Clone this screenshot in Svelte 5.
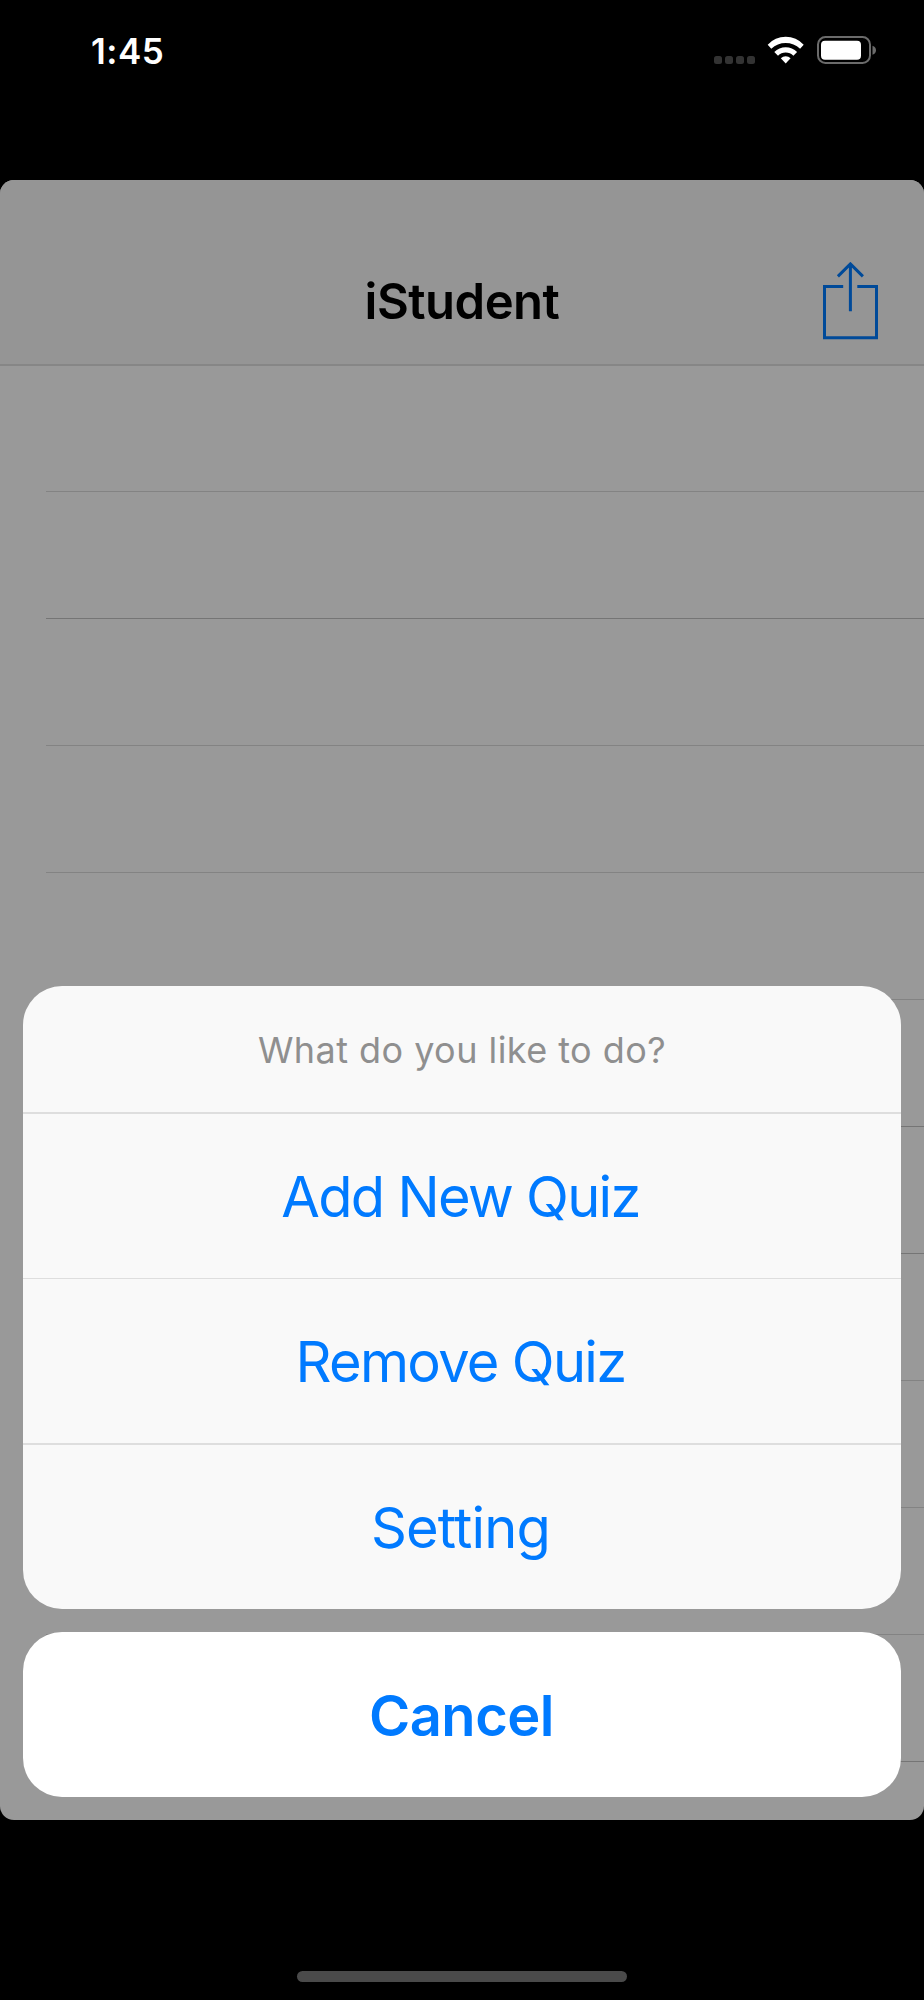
<script lang="ts">
  interface Action {
    id: string;
    label: string;
  }

  const actions: Action[] = [
    { id: "add", label: "Add New Quiz" },
    { id: "remove", label: "Remove Quiz" },
    { id: "setting", label: "Setting" },
  ];

  const rows = Array.from({ length: 11 }, (_, i) => i);
  const signalDots = [0, 1, 2, 3];

  let open = $state(true);

  function close() {
    open = false;
  }
</script>

<div class="phone">
  <div class="status-bar">
    <span class="time">1:45</span>
    <div class="status-icons">
      <div class="signal">
        {#each signalDots as dot (dot)}
          <span class="dot"></span>
        {/each}
      </div>
      <svg class="wifi" width="38" height="28" viewBox="0 0 38 28">
        <path d="M.7 8.7A24.3 24.3 0 0 1 36.7 8.7L33.1 12.7A21 21 0 0 0 4.3 12.7Z" />
        <path d="M7.3 16A16 16 0 0 1 30.1 16L26.4 19.7A11 11 0 0 0 11 19.7Z" />
        <path d="M13.8 22.3A7 7 0 0 1 23.6 22.3L18.7 27.5Z" />
      </svg>
      <svg class="battery" width="60" height="28" viewBox="0 0 60 28">
        <rect x="1" y="1" width="52" height="26" rx="7.5" fill="none" stroke="#6b6b6b" stroke-width="2" />
        <rect x="4" y="4.7" width="40" height="19" rx="4" fill="#fff" />
        <path d="M55.5 9.7Q59 11 59 14.2T55.5 18.7Z" fill="#6b6b6b" />
      </svg>
    </div>
  </div>

  <div class="window">
    <div class="navbar">
      <span></span>
      <h1 class="nav-title">iStudent</h1>
      <button class="share" aria-label="Share">
        <svg width="56" height="78" viewBox="0 0 56 78" fill="none" stroke="#004a99" stroke-width="3">
          <path d="M20.2 24.6H1.5V75.8H53.5V24.6H34.3" />
          <path d="M27.4 49.3V3M14.9 14.4L27.4 1.9L39.9 14.4" />
        </svg>
      </button>
    </div>
    <div class="table">
      {#each rows as row (row)}
        <div class="row"></div>
      {/each}
    </div>
  </div>

  <div class="home-area">
    <div class="home-indicator"></div>
  </div>

  {#if open}
    <div class="sheet">
      <div class="sheet-group">
        <div class="sheet-title">What do you like to do?</div>
        {#each actions as action (action.id)}
          <button class="sheet-btn {action.id}" onclick={close}><span>{action.label}</span></button>
        {/each}
      </div>
      <button class="sheet-btn cancel" onclick={close}><span>Cancel</span></button>
    </div>
  {/if}
</div>

<style>
  :global(body) {
    background: #000;
  }

  .phone {
    position: relative;
    display: flex;
    flex-direction: column;
    width: 924px;
    height: 2000px;
    overflow: hidden;
    background: #000;
    font-family: Inter, "Liberation Sans", sans-serif;
  }

  .status-bar {
    display: flex;
    justify-content: space-between;
    align-items: flex-start;
    height: 180px;
    box-sizing: border-box;
    padding: 36px 47px 0 91px;
  }

  .time {
    padding-top: 1px;
    font-size: 35px;
    font-weight: 600;
    line-height: 28px;
    letter-spacing: 0.5px;
    color: #fff;
  }

  .status-icons {
    display: flex;
    align-items: flex-start;
  }

  .signal {
    display: flex;
    gap: 3px;
    padding-top: 20px;
    margin-right: 12px;
  }

  .dot {
    width: 8px;
    height: 8px;
    border-radius: 2.5px;
    background: #333;
  }

  .wifi {
    fill: #fff;
    margin-right: 12px;
  }

  .window {
    display: flex;
    flex-direction: column;
    height: 1640px;
    border-radius: 14px;
    overflow: hidden;
    background: #999;
  }

  .navbar {
    display: grid;
    grid-template-columns: 1fr auto 1fr;
    align-items: center;
    height: 186px;
    box-sizing: border-box;
    padding: 58px 45px 0;
    border-bottom: 2px solid #868686;
    background: #959595;
  }

  .nav-title {
    margin: 0;
    padding-top: 2px;
    font-size: 49px;
    font-weight: 600;
    line-height: 60px;
    letter-spacing: -0.5px;
    color: #000;
  }

  .share {
    justify-self: end;
    display: flex;
    padding: 0;
    border: none;
    background: none;
  }

  .table {
    display: flex;
    flex-direction: column;
    padding-left: 46px;
  }

  .row {
    height: 127px;
    box-sizing: border-box;
    flex-shrink: 0;
    border-bottom: 1px solid #838383;
  }

  .row:first-child {
    height: 126px;
  }

  .row:nth-child(2),
  .row:nth-child(6),
  .row:nth-child(7),
  .row:nth-child(11) {
    border-bottom-color: #757575;
  }

  .home-area {
    display: flex;
    justify-content: center;
    align-items: flex-end;
    height: 180px;
    box-sizing: border-box;
    padding-bottom: 18px;
  }

  .home-indicator {
    width: 330px;
    height: 11px;
    border-radius: 6px;
    background: #4a4a4a;
  }

  .sheet {
    position: absolute;
    left: 23px;
    right: 23px;
    bottom: 203px;
    display: flex;
    flex-direction: column;
    gap: 23px;
  }

  .sheet-group {
    display: grid;
    grid-template-rows: 128px 165px 166px 164px;
    border-radius: 39px;
    overflow: hidden;
    background: #f9f9f9;
  }

  .sheet-title {
    display: flex;
    justify-content: center;
    align-items: center;
    padding-top: 2px;
    border-bottom: 2px solid #dedede;
    font-size: 36px;
    letter-spacing: 0.45px;
    color: #8f8f8f;
  }

  .sheet-btn {
    display: flex;
    justify-content: center;
    align-items: center;
    padding: 2px 3px 0 0;
    border: none;
    border-bottom: 2px solid #dedede;
    background: none;
    font-family: inherit;
    font-size: 56px;
    letter-spacing: -1.7px;
    color: #007aff;
    cursor: pointer;
  }

  .sheet-btn.add {
    border-bottom-width: 1px;
  }

  .sheet-btn.setting {
    border-bottom: none;
    letter-spacing: -0.8px;
  }

  .sheet-btn.cancel {
    height: 165px;
    padding-right: 1px;
    border-bottom: none;
    border-radius: 39px;
    background: #fff;
    font-weight: 600;
    letter-spacing: -0.5px;
  }
</style>
